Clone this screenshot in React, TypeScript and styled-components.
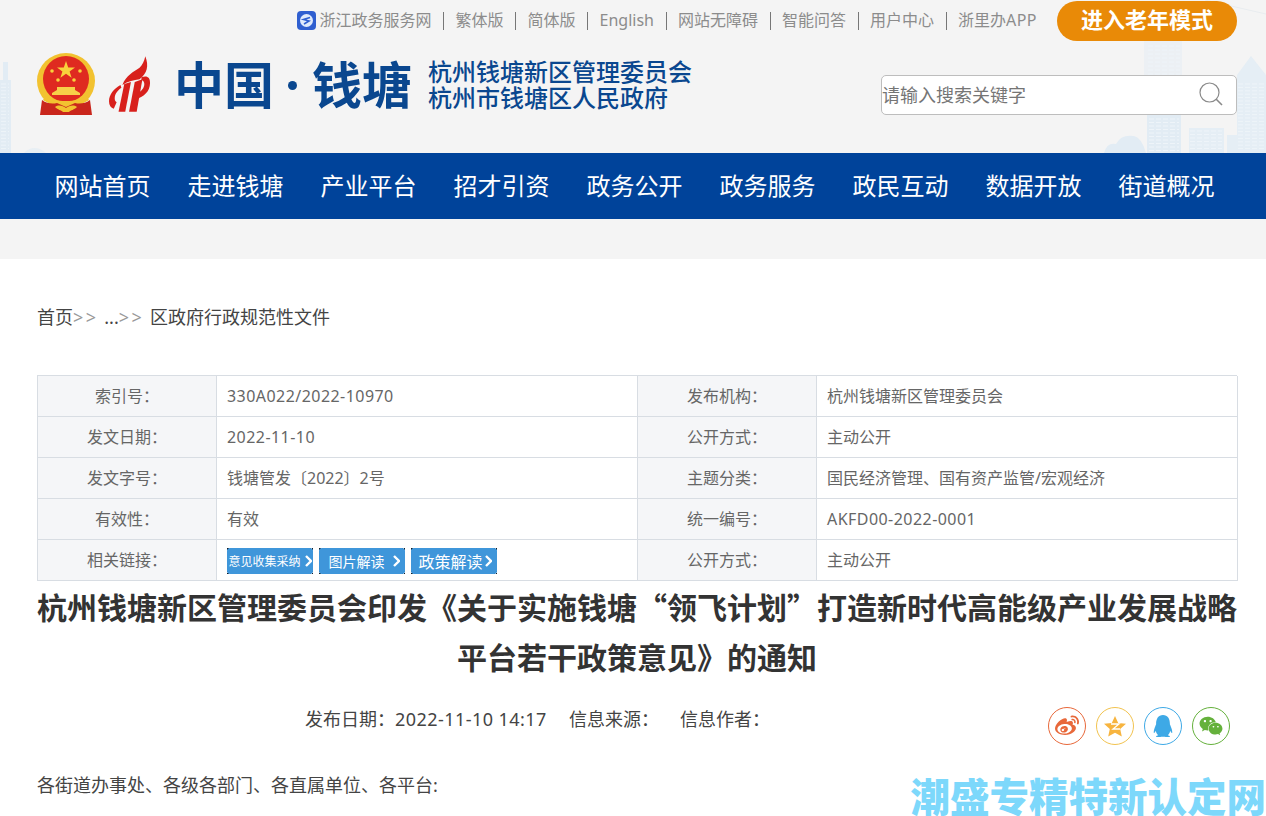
import React from "react";
import styled, { createGlobalStyle } from "styled-components";
import { FaWeibo, FaQq, FaWeixin } from "react-icons/fa";

const Global = createGlobalStyle`
  html, body { margin: 0; padding: 0; height: 816px; overflow: hidden; background: #fff; }
  body { font-family: "Noto Sans", "Noto Sans CJK SC", "Liberation Sans", sans-serif; }
  * { box-sizing: border-box; }
`;

const Page = styled.div`position: relative; width: 1266px; height: 816px; overflow: hidden;`;
const Masthead = styled.header`position: relative; height: 153px; background: #f4f4f4; overflow: hidden;`;
const Skyline = styled.svg`position: absolute; inset: 0; width: 1266px; height: 153px;`;
const Wrap = styled.div`position: relative; width: 1200px; margin: 0 0 0 37px;`;
const TopBar = styled.div`display: flex; justify-content: flex-end; align-items: center; height: 41px;`;
const TopLink = styled.a`display: flex; align-items: center; gap: 4px; font-size: 16px; line-height: 41px; color: #8c8c8c; white-space: nowrap;`;
const Sep = styled.span`width: 1px; height: 18px; margin: 1px 11.5px 0; background: #777;`;
const ElderButton = styled.a`display: flex; align-items: center; justify-content: center; width: 180px; height: 40px; margin-left: 20px; border-radius: 20px; background: #e98a07; color: #fff; font-size: 22px; font-weight: 700; line-height: 34px; padding-bottom: 4px;`;
const BrandRow = styled.div`display: flex; align-items: center; height: 112px; padding-bottom: 26px;`;
const Emblems = styled.div`display: flex; align-items: center; gap: 14px; margin-right: 23px;`;
const Wordmark = styled.div`display: flex; align-items: center; margin-top: 2px; font-size: 50px; font-weight: 700; color: #0a478f; line-height: 60px;`;
const Dot = styled.span`width: 9px; height: 9px; border-radius: 50%; background: #0a478f; margin: 0 15px 0 14px;`;
const SubName = styled.div`margin: 2px 0 0 16px; font-size: 24px; font-weight: 500; line-height: 26px; color: #0a478f; white-space: nowrap;`;
const SearchBox = styled.div`display: flex; align-items: center; justify-content: space-between; width: 356px; height: 40px; margin-left: auto; margin-top: 22px; padding: 0 13px 2px 0; border: 1px solid #bdbdbd; border-radius: 5px; background: #fff; color: #757575; font-size: 18px;`;
const Nav = styled.nav`height: 66px; background: #00439a;`;
const NavGrid = styled.div`display: grid; grid-template-columns: repeat(9, 133px); width: 1197px; margin-left: 36px;`;
const NavItem = styled.a`text-align: center; font-size: 24px; line-height: 65px; color: #fff; white-space: nowrap;`;
const Band = styled.div`height: 40px; background: #f4f4f4;`;
const Crumbs = styled.div`display: flex; height: 116px; align-items: flex-start; padding-top: 45px; font-size: 18px; line-height: 26px; color: #444; white-space: pre;`;
const CrumbArrows = styled.span`color: #999; letter-spacing: 2.5px; margin-right: 1px;`;
const InfoTable = styled.div`display: grid; grid-template-columns: 179px 421px 179px 421px; width: 1200px; border-top: 1px solid #d8dde3; border-left: 1px solid #d8dde3;`;
const Label = styled.div`height: 41px; display: flex; align-items: center; justify-content: center; padding-bottom: 2px; background: #f5f6f8; border-right: 1px solid #d8dde3; border-bottom: 1px solid #d8dde3; font-size: 16px; color: #666;`;
const Value = styled.div`height: 41px; display: flex; align-items: center; gap: 6px; padding: 0 0 2px 10px; border-right: 1px solid #d8dde3; border-bottom: 1px solid #d8dde3; font-size: 16px; color: #666; white-space: nowrap;`;
const Latin = styled.span`letter-spacing: .45px;`;
const LatinCell = styled(Latin)`padding-top: 2px;`;
const LinkFrame = styled.a`display: block; width: 86px; height: 26px; margin-top: 4px; border: 1px dotted #111;`;
const LinkFace = styled.span<{ $size: number; $gap: number; $pad: number }>`display: flex; align-items: center; justify-content: center; gap: ${p => p.$gap}px; width: 86px; height: 26px; margin: -1px; padding: 0 0 1px ${p => p.$pad}px; border-radius: 3px; background: #3f96da; color: #fff; font-size: ${p => p.$size}px; white-space: nowrap;`;
const Title = styled.h1`margin: 0; font-family: "Noto Sans CJK SC", sans-serif; text-align: center; font-size: 30px; line-height: 50px; font-weight: 700; color: #333;`;
const MetaRow = styled.div`position: relative; height: 84px; padding: 25px 0 0 268px; font-size: 18px; line-height: 26px; color: #444; white-space: pre;`;
const MetaGroup = styled.span<{ $w: number }>`display: inline-block; width: ${p => p.$w}px;`;
const Share = styled.div`position: absolute; right: 7px; top: 26px; display: flex; gap: 10px;`;
const ShareDisc = styled.a<{ $c: string }>`display: flex; align-items: center; justify-content: center; width: 38px; height: 38px; border: 1px solid ${p => p.$c}; border-radius: 50%; color: ${p => p.$c}; background: #fff;`;
const Body = styled.p`margin: 0; padding-top: 7px; font-size: 18px; line-height: 26px; color: #444;`;
const Watermark = styled.div`position: absolute; right: 0; bottom: 0; font-size: 39.500px; line-height: 38px; font-weight: 900; color: #7dd8fb; white-space: nowrap;`;

const Chevron = ({ w = 7, h = 12 }: { w?: number; h?: number }) => (
  <svg width={w} height={h} viewBox="0 0 7 12"><path d="M1 1l5 5-5 5" fill="none" stroke="#fff" strokeWidth="2.400" /></svg>
);

const ZjIcon = () => (
  <svg width="19" height="19" viewBox="0 0 19 19">
    <rect width="19" height="19" rx="4" fill="#2f5fd0" />
    <circle cx="9.500" cy="9.500" r="6.500" fill="#dfeafc" />
    <path d="M13 6.500 6.500 8.500 12 10 7 13" fill="none" stroke="#2f5fd0" strokeWidth="1.600" />
  </svg>
);

const NationalEmblem = () => (
  <svg width="58" height="62" viewBox="0 0 58 62">
    <ellipse cx="29" cy="28" rx="29" ry="28" fill="#f2c230" />
    <circle cx="29" cy="26" r="23" fill="#df2a20" />
    <path d="M29 8l2.200 6.400h6.800l-5.400 4 2 6.400-5.600-4-5.600 4 2-6.400-5.400-4h6.800z" fill="#f8d23c" />
    <circle cx="15" cy="18" r="1.800" fill="#f8d23c" /><circle cx="43" cy="18" r="1.800" fill="#f8d23c" />
    <circle cx="21" cy="27" r="1.800" fill="#f8d23c" /><circle cx="37" cy="27" r="1.800" fill="#f8d23c" />
    <path d="M15 42h28v-2l-5-3v-3H20v3l-5 3z" fill="#f7d048" />
    <path d="M9 42c6 8 34 8 40 0l3 5c-6 6-40 6-46 0z" fill="#f2c230" />
    <path d="M5 47c5 4 11 4 15 3l9 4 9-4c4 1 10 1 15-3l2 15H3z" fill="#c9261c" />
    <path d="M18 54c4-3 8-1 11 1 3-2 7-4 11-1-3 3-6 3-8 5h-6c-2-2-5-2-8-5z" fill="#f2c230" />
  </svg>
);

const CtpLogo = () => (
  <svg width="42" height="58" viewBox="0 0 44 58" fill="#d8201c">
    <path d="M38 0c4 10 2 18-6 24-6 1-12 2-18 6 4-10 12-14 18-18 3-3 5-7 6-12z" />
    <path d="M12 30c-7 4-12 10-12 17 0 4 2 7 5 8l3-7c-2-1-2-3-2-4 0-5 4-9 7-11z" />
    <path d="M16 29l7-2-6 31h-7z" />
    <path d="M27 27l8-3-6 34h-8z" />
    <path d="M34 22c6-2 9 0 9 6 0 9-7 15-15 17l2-7c4-1 7-5 7-9 0-2-1-4-3-4z" />
  </svg>
);

const SearchIcon = () => (
  <svg width="24" height="24" viewBox="0 0 24 24" fill="none" stroke="#8a8a8a" strokeWidth="1.200">
    <circle cx="10.500" cy="10.500" r="9.500" /><path d="M17 17l6 6" strokeWidth="1.600" />
  </svg>
);

const QzoneStar = () => (
  <svg width="22" height="21" viewBox="0 0 22 21">
    <path d="M11 0l3.200 7 7.800.8-5.800 5.200 1.600 7.600L11 16.800 4.200 20.600 5.800 13 0 7.800 7.800 7z" fill="#f7b43f" />
    <path d="M7 8h8l-6 5h7" fill="none" stroke="#fff" strokeWidth="1.300" />
  </svg>
);

const Windows = ({ x, y, w, n, step }: { x: number; y: number; w: number; n: number; step: number }) => (
  <g stroke="#eef4f9" strokeWidth="1">
    {Array.from({ length: n }, (_, i) => (
      <path key={i} d={`M${x} ${y + i * step}h${w}`} strokeDasharray="5 2" />
    ))}
  </g>
);

const navItems = ["网站首页", "走进钱塘", "产业平台", "招才引资", "政务公开", "政务服务", "政民互动", "数据开放", "街道概况"];
const topLinks: React.ReactNode[] = ["繁体版", "简体版", "English", "网站无障碍", "智能问答", "用户中心", <span>浙里办<Latin>APP</Latin></span>];
const rows: [string, React.ReactNode, string, React.ReactNode][] = [
  ["索引号：", <LatinCell>330A022/2022-10970</LatinCell>, "发布机构：", "杭州钱塘新区管理委员会"],
  ["发文日期：", <LatinCell>2022-11-10</LatinCell>, "公开方式：", "主动公开"],
  ["发文字号：", "钱塘管发〔2022〕2号", "主题分类：", "国民经济管理、国有资产监管/宏观经济"],
  ["有效性：", "有效", "统一编号：", <LatinCell>AKFD00-2022-0001</LatinCell>],
];

export default function App() {
  return (
    <Page>
      <Global />
      <Masthead>
        <Skyline viewBox="0 0 1266 153" aria-hidden="true">
          <g fill="#e2ecf4">
            <path d="M0 80h3v-18h5v18h3v73H0z" />
            <path d="M24 153q10-10 22 0z" opacity=".7" />
            <path d="M1144 41h38v34h-38z" opacity=".45" />
            <path d="M1147 115h34v38h-34z" />
            <path d="M1104 153q3-11 12-9 5-10 18-8 8 2 12 17z" />
            <path d="M1189 128h35v25h-35z" opacity=".85" />
            <path d="M1227 135h10v18h-10z" opacity=".85" />
            <path d="M1237 75l14-19 15 19v78h-29z" opacity=".85" />
          </g>
          <Windows x={1148} y={46} w={32} n={8} step={4} />
          <Windows x={1149} y={119} w={30} n={10} step={3.500} />
          <Windows x={1190} y={131} w={32} n={6} step={3.500} />
          <Windows x={1238} y={84} w={27} n={20} step={3.400} />
          <Windows x={1} y={84} w={8} n={20} step={3.400} />
          <path d="M1205 0 1266 14" stroke="#e8ecef" strokeWidth="1" fill="none" />
        </Skyline>
        <Wrap>
          <TopBar>
            <TopLink><ZjIcon />浙江政务服务网</TopLink>
            {topLinks.map((t, i) => (
              <React.Fragment key={i}><Sep /><TopLink>{t}</TopLink></React.Fragment>
            ))}
            <ElderButton>进入老年模式</ElderButton>
          </TopBar>
          <BrandRow>
            <Emblems><NationalEmblem /><CtpLogo /></Emblems>
            <Wordmark>中国<Dot />钱塘</Wordmark>
            <SubName>杭州钱塘新区管理委员会<br />杭州市钱塘区人民政府</SubName>
            <SearchBox>请输入搜索关键字<SearchIcon /></SearchBox>
          </BrandRow>
        </Wrap>
      </Masthead>
      <Nav><NavGrid>{navItems.map(n => <NavItem key={n}>{n}</NavItem>)}</NavGrid></Nav>
      <Band />
      <Wrap>
        <Crumbs>首页<CrumbArrows>&gt;&gt;</CrumbArrows> ...<CrumbArrows>&gt;&gt;</CrumbArrows> 区政府行政规范性文件</Crumbs>
        <InfoTable>
          {rows.map(r => (
            <React.Fragment key={r[0]}>
              <Label>{r[0]}</Label><Value>{r[1]}</Value><Label>{r[2]}</Label><Value>{r[3]}</Value>
            </React.Fragment>
          ))}
          <Label>相关链接：</Label>
          <Value>
            <LinkFrame><LinkFace $size={12} $gap={4} $pad={0}>意见收集采纳<Chevron /></LinkFace></LinkFrame>
            <LinkFrame><LinkFace $size={14} $gap={8} $pad={4}>图片解读<Chevron /></LinkFace></LinkFrame>
            <LinkFrame><LinkFace $size={16} $gap={2} $pad={2}>政策解读<Chevron /></LinkFace></LinkFrame>
          </Value>
          <Label>公开方式：</Label>
          <Value>主动公开</Value>
        </InfoTable>
        <Title>杭州钱塘新区管理委员会印发《关于实施钱塘“领飞计划”打造新时代高能级产业发展战略平台若干政策意见》的通知</Title>
        <MetaRow>
          <MetaGroup $w={264}>发布日期：<Latin>2022-11-10 14:17</Latin></MetaGroup>
          <MetaGroup $w={111}>信息来源：</MetaGroup>
          <MetaGroup $w={100}>信息作者：</MetaGroup>
          <Share>
            <ShareDisc $c="#e8683a"><FaWeibo size={24} /></ShareDisc>
            <ShareDisc $c="#f2c34f"><QzoneStar /></ShareDisc>
            <ShareDisc $c="#3ea9e6"><FaQq size={22} /></ShareDisc>
            <ShareDisc $c="#65b13c"><FaWeixin size={24} /></ShareDisc>
          </Share>
        </MetaRow>
        <Body>各街道办事处、各级各部门、各直属单位、各平台:</Body>
      </Wrap>
      <Watermark>潮盛专精特新认定网</Watermark>
    </Page>
  );
}
